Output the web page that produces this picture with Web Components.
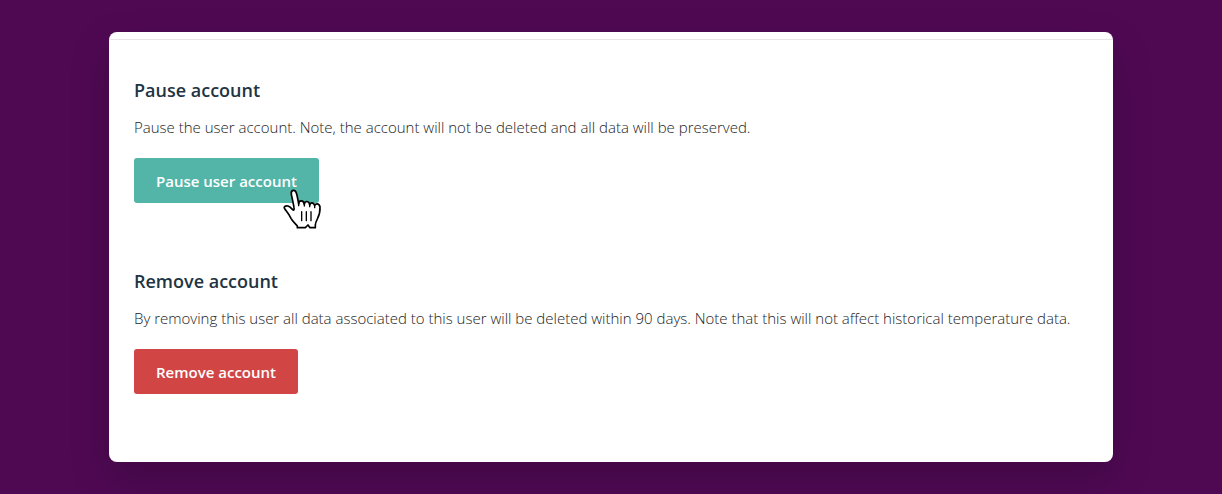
<!DOCTYPE html>
<html lang="en">
<head>
<meta charset="utf-8">
<title>Account settings</title>
<style>
body{margin:0;min-height:100vh;background:#4f0953;font-family:"Open Sans",sans-serif;color:#1c1c1c}
</style>
</head>
<body>
<settings-card>
  <account-section>
    <span slot="title">Pause account</span>
    <span slot="text">Pause the user account. Note, the account will not be deleted and all data will be preserved.</span>
    <action-button slot="action">Pause user account<hand-cursor slot="pointer"></hand-cursor></action-button>
  </account-section>
  <account-section>
    <span slot="title">Remove account</span>
    <span slot="text">By removing this user all data associated to this user will be deleted within 90 days. Note that this will not affect historical temperature data.</span>
    <action-button slot="action" class="danger">Remove account</action-button>
  </account-section>
</settings-card>
<script>
function define(name, markup) {
  customElements.define(name, class extends HTMLElement {
    constructor() {
      super();
      this.attachShadow({ mode: "open" }).innerHTML = markup;
    }
  });
}
define("settings-card", `
<style>
:host{display:block;padding:32px}
main{box-sizing:border-box;max-width:1004px;margin:0 auto;padding-top:7px;background:#fff;border-radius:8px;box-shadow:0 16px 40px rgba(0,0,0,.18)}
.body{display:flex;flex-direction:column;gap:66px;border-top:1px solid #e8e4e8;padding:38px 25px 68px}
</style>
<main><div class="body"><slot></slot></div></main>`);
define("account-section", `
<style>
:host{display:block}
h2{margin:0 0 13px;font-size:18px;line-height:24px;font-weight:600;color:#1f3442}
p{margin:0 0 19px;font-size:15px;line-height:24px;font-weight:300}
</style>
<section><h2><slot name="title"></slot></h2><p><slot name="text"></slot></p><slot name="action"></slot></section>`);
define("action-button", `
<style>
:host{display:flex;width:fit-content;position:relative;--fill:#52b5a8}
:host(.danger){--fill:#d14545}
button{height:45px;padding:0 22px;border:0;border-radius:3px;background:var(--fill);color:#fff;font:600 15px/24px "Open Sans",sans-serif;cursor:pointer}
slot[name=pointer]{display:block;position:absolute;right:-3px;bottom:-27px}
</style>
<button type="button"><slot></slot></button><slot name="pointer"></slot>`);
define("hand-cursor", `
<style>:host{display:block;pointer-events:none}svg{display:block}</style>
<svg width="40" height="42" viewBox="36 39 120 126" aria-hidden="true">
<path d="M82 158V153C76 146 67 138 63 130C58 119 51 111 45 103C39 95 47 91 54 93C61 95 65 101 69 105C72 106 73 102 72 98C70 84 66 68 64 58C62 44 75 42 79 54C82 63 84 75 86 87C86 75 101 74 103 88C104 76 118 77 119 90C121 80 132 82 134 92C136 84 148 84 150 96C151 110 147 122 142 132C139 138 136 144 136 150V158H120L114 150L106 158Z" fill="#fff" stroke="#000" stroke-width="5" stroke-linejoin="round"/>
<path d="M86 84V92M103 86V93M119 88V95M134 90V98M95 110V137M109 110V137M123 110V137" fill="none" stroke="#000" stroke-width="4" stroke-linecap="round"/>
</svg>`);
</script>
</body>
</html>
